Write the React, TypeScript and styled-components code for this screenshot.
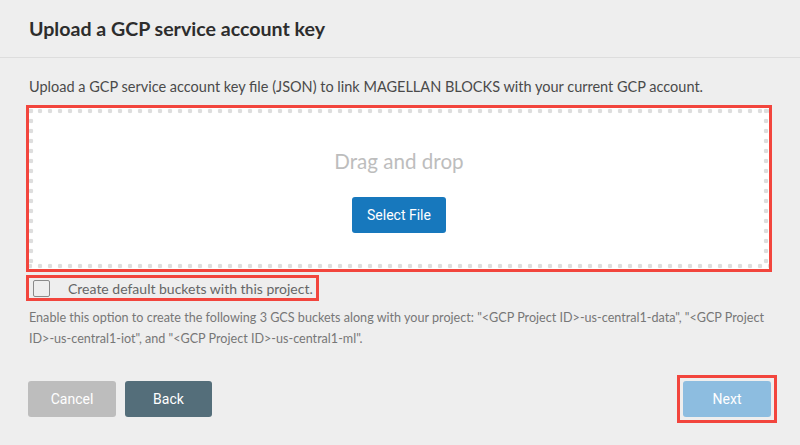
import React, { useState } from 'react'
import styled, { createGlobalStyle } from 'styled-components'

const GlobalStyle = createGlobalStyle`
  html, body {
    margin: 0;
    padding: 0;
    background: #eeeeee;
  }
  body {
    font-family: Lato, 'Open Sans', 'Liberation Sans', sans-serif;
    color: #333;
  }
`

const annotation = '#f2453d'

const Page = styled.div`
  width: 800px;
  height: 445px;
  background: #eeeeee;
  display: flex;
  flex-direction: column;
`

const Header = styled.div`
  height: 57px;
  border-bottom: 1px solid #dddddd;
  display: flex;
  align-items: center;
  padding: 0 29px;
`

const Title = styled.h1`
  margin: 0;
  font-size: 19.6px;
  font-weight: 700;
  color: #2d2d2d;
`

const Body = styled.div`
  padding: 18px 28px 0 29px;
  display: flex;
  flex-direction: column;
`

const Lead = styled.p`
  margin: 0;
  font-size: 14.5px;
  line-height: 22px;
  color: #4a4a4a;
`

const DropZone = styled.div`
  margin-top: 10px;
  margin-right: 3px;
  height: 161px;
  background-color: #fff;
  outline: 3px solid ${annotation};
  display: flex;
  flex-direction: column;
  align-items: center;
  padding-top: 40px;
  box-sizing: border-box;
  background-image: radial-gradient(circle, #dddddd 2px, transparent 2.6px),
    radial-gradient(circle, #dddddd 2px, transparent 2.6px),
    radial-gradient(circle, #dddddd 2px, transparent 2.6px),
    radial-gradient(circle, #dddddd 2px, transparent 2.6px);
  background-size: 10px 10px;
  background-repeat: repeat-x, repeat-x, repeat-y, repeat-y;
  background-position: -4px -2px, -4px calc(100% + 2px), -3px -2px, calc(100% + 2px) -2px;
`

const DropHint = styled.div`
  font-size: 20.6px;
  color: #bdbdbd;
  line-height: 26px;
`

const Button = styled.button<{ $tone: string; $width?: number }>`
  font-family: Roboto, 'Liberation Sans', sans-serif;
  font-size: 14px;
  color: #fff;
  background: ${(p) => p.$tone};
  border: none;
  border-radius: 3px;
  height: 36px;
  width: ${(p) => p.$width ?? 88}px;
  padding: 0;
  cursor: pointer;
`

const SelectButton = styled(Button)`
  margin-top: 23px;
`

const CheckRow = styled.label`
  margin-top: 8px;
  margin-left: -1px;
  align-self: flex-start;
  display: flex;
  align-items: center;
  gap: 18px;
  padding: 3px 4px 2px 5px;
  outline: 3px solid ${annotation};
  outline-offset: -1px;
  font-size: 14px;
  color: #666;
  cursor: pointer;
`

const Box = styled.span<{ $on: boolean }>`
  width: 15px;
  height: 15px;
  border: 1.5px solid #8a8a8a;
  border-radius: 2px;
  background: ${(p) => (p.$on ? '#1a7abf' : 'transparent')};
`

const Help = styled.p`
  margin: 8px 0 0;
  font-size: 12.6px;
  line-height: 21px;
  color: #777;
`

const Footer = styled.div`
  margin-top: auto;
  height: 64px;
  padding: 0 29px 0 28px;
  display: flex;
  align-items: flex-start;
  gap: 9px;
`

const Spacer = styled.div`
  flex: 1;
`

const Marked = styled.div`
  outline: 3px solid ${annotation};
  outline-offset: 3px;
  display: flex;
`

export default function App() {
  const [on, setOn] = useState(false)
  return (
    <Page>
      <GlobalStyle />
      <Header>
        <Title>Upload a GCP service account key</Title>
      </Header>
      <Body>
        <Lead>
          Upload a GCP service account key file (JSON) to link MAGELLAN BLOCKS with your current GCP account.
        </Lead>
        <DropZone>
          <DropHint>Drag and drop</DropHint>
          <SelectButton $tone='#1778bd' $width={94}>
            Select File
          </SelectButton>
        </DropZone>
        <CheckRow onClick={() => setOn(!on)}>
          <Box $on={on} />
          Create default buckets with this project.
        </CheckRow>
        <Help>
          Enable this option to create the following 3 GCS buckets along with your project: "&lt;GCP Project
          ID&gt;-us-central1-data", "&lt;GCP Project ID&gt;-us-central1-iot", and "&lt;GCP Project
          ID&gt;-us-central1-ml".
        </Help>
      </Body>
      <Footer>
        <Button $tone='#bdbdbd'>Cancel</Button>
        <Button $tone='#546e7a' $width={87}>
          Back
        </Button>
        <Spacer />
        <Marked>
          <Button $tone='#8dbde0'>Next</Button>
        </Marked>
      </Footer>
    </Page>
  )
}
